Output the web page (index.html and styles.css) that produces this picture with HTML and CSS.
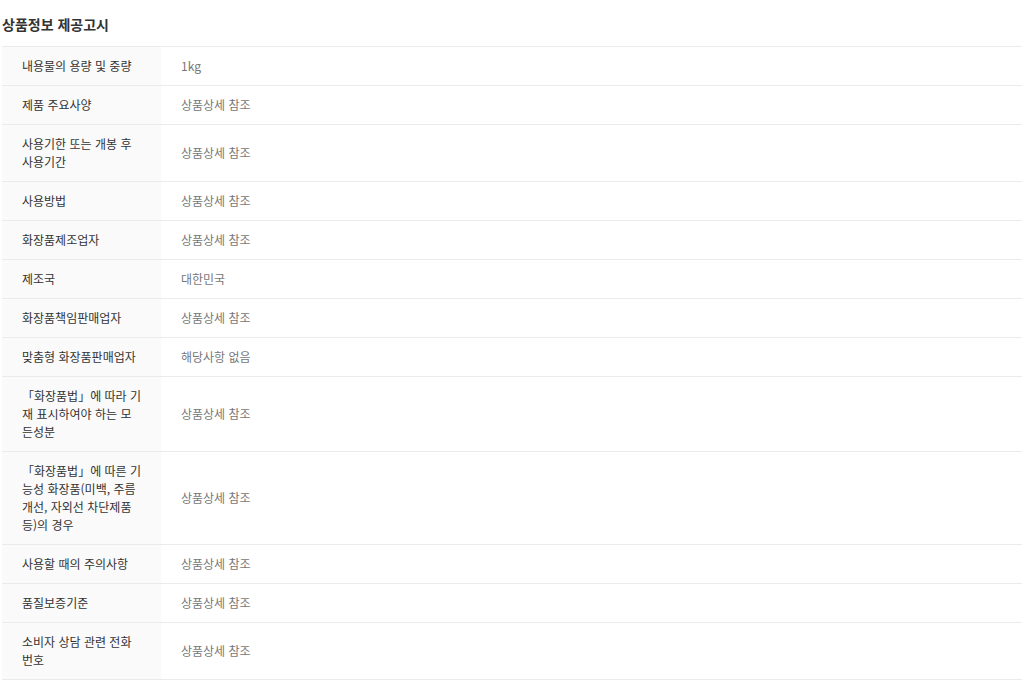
FILE: index.html
```html
<!DOCTYPE html>
<html lang="ko">
<head>
    <meta charset="UTF-8">
    <meta name="viewport" content="width=device-width, initial-scale=1.0">
    <title>상품정보 제공고시</title>
    <link rel="stylesheet" href="styles.css">
</head>
<body>
    <div class="notice">
        <h3 class="notice-title">상품정보 제공고시</h3>
        <table class="notice-table">
            <tr>
                <th>내용물의 용량 및 중량</th>
                <td>1kg</td>
            </tr>
            <tr>
                <th>제품 주요사양</th>
                <td>상품상세 참조</td>
            </tr>
            <tr>
                <th>사용기한 또는 개봉 후 사용기간</th>
                <td>상품상세 참조</td>
            </tr>
            <tr>
                <th>사용방법</th>
                <td>상품상세 참조</td>
            </tr>
            <tr>
                <th>화장품제조업자</th>
                <td>상품상세 참조</td>
            </tr>
            <tr>
                <th>제조국</th>
                <td>대한민국</td>
            </tr>
            <tr>
                <th>화장품책임판매업자</th>
                <td>상품상세 참조</td>
            </tr>
            <tr>
                <th>맞춤형 화장품판매업자</th>
                <td>해당사항 없음</td>
            </tr>
            <tr>
                <th>「화장품법」에 따라 기재 표시하여야 하는 모든성분</th>
                <td>상품상세 참조</td>
            </tr>
            <tr>
                <th>「화장품법」에 따른 기능성 화장품(미백, 주름개선, 자외선 차단제품 등)의 경우</th>
                <td>상품상세 참조</td>
            </tr>
            <tr>
                <th>사용할 때의 주의사항</th>
                <td>상품상세 참조</td>
            </tr>
            <tr>
                <th>품질보증기준</th>
                <td>상품상세 참조</td>
            </tr>
            <tr>
                <th>소비자 상담 관련 전화번호</th>
                <td>상품상세 참조</td>
            </tr>
        </table>
    </div>
</body>
</html>
```

FILE: styles.css
```css
body {
    margin: 0;
    background: #fff;
    font-family: "Noto Sans CJK KR", "Noto Sans", sans-serif;
}

.notice {
    width: 1020px;
    padding: 0 2px;
}

.notice-title {
    font-size: 14px;
    font-weight: 700;
    color: #333;
    margin: 0;
    padding: 14px 0 12px;
    line-height: 20px;
}

.notice-table {
    width: 100%;
    border-collapse: collapse;
    border-top: 1px solid #ebebeb;
    font-size: 12px;
    line-height: 18px;
}

.notice-table th,
.notice-table td {
    padding: 10px 20px;
    border-bottom: 1px solid #ebebeb;
    text-align: left;
    vertical-align: middle;
    word-break: break-all;
}

.notice-table th {
    width: 120px;
    padding-right: 19px;
    background-color: #fafafa;
    font-weight: 400;
    color: #333;
}

.notice-table td {
    color: #777;
}
```
